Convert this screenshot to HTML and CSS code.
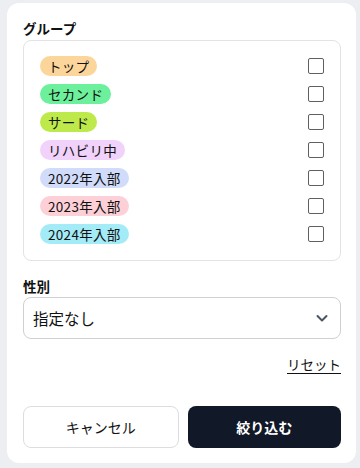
FILE: index.html
```html
<!DOCTYPE html>
<html lang="ja">
<head>
<meta charset="utf-8">
<link rel="stylesheet" href="styles.css">
</head>
<body>
<div class="modal">
  <div class="label">グループ</div>
  <div class="group-box">
    <div class="row"><span class="badge b-top">トップ</span><span class="check"></span></div>
    <div class="row"><span class="badge b-second">セカンド</span><span class="check"></span></div>
    <div class="row"><span class="badge b-third">サード</span><span class="check"></span></div>
    <div class="row"><span class="badge b-rehab">リハビリ中</span><span class="check"></span></div>
    <div class="row"><span class="badge b-2022">2022年入部</span><span class="check"></span></div>
    <div class="row"><span class="badge b-2023">2023年入部</span><span class="check"></span></div>
    <div class="row"><span class="badge b-2024">2024年入部</span><span class="check"></span></div>
  </div>
  <div class="label label-gender">性別</div>
  <div class="select">
    <span>指定なし</span>
    <svg class="chev" width="14" height="14" viewBox="0 0 14 14"><path d="M2.5 5 L7 9.5 L11.5 5" fill="none" stroke="#4b5563" stroke-width="2" stroke-linecap="round" stroke-linejoin="round"/></svg>
  </div>
  <div class="reset-row"><span class="reset">リセット</span></div>
  <div class="actions">
    <button class="btn btn-cancel">キャンセル</button>
    <button class="btn btn-apply">絞り込む</button>
  </div>
</div>
</body>
</html>
```
FILE: styles.css
```css
html, body {
  margin: 0;
  padding: 0;
}
body {
  width: 360px;
  height: 468px;
  background: #eceef1;
  font-family: "Noto Sans CJK JP", "Noto Sans", sans-serif;
  color: #111;
  overflow: hidden;
  padding-top: 3px;
  box-sizing: border-box;
}
.modal {
  margin-left: 7px;
  width: 349px;
  height: 460px;
  box-sizing: border-box;
  background: #fff;
  border-radius: 12px;
  padding: 16px 15px 15px 16px;
  display: flex;
  flex-direction: column;
}
.label {
  font-size: 13.5px;
  font-weight: 700;
  line-height: 18px;
  margin-bottom: 3px;
}
.label-gender {
  margin-top: 16px;
  margin-bottom: 2px;
}
.group-box {
  border: 1px solid #e2e3e5;
  border-radius: 8px;
  padding: 15px 16px 16px 16px;
  display: flex;
  flex-direction: column;
  gap: 8px;
}
.row {
  display: flex;
  align-items: center;
  justify-content: space-between;
  height: 20px;
}
.badge {
  font-size: 13.5px;
  letter-spacing: 0.3px;
  line-height: 20px;
  height: 20px;
  padding: 0 8px;
  border-radius: 10px;
  color: #111;
}
.b-top { background: #fcd59b; }
.b-second { background: #6cf09b; }
.b-third { background: #bdea4a; }
.b-rehab { background: #f1d2fb; }
.b-2022 { background: #d0dcfa; }
.b-2023 { background: #fdd0d8; }
.b-2024 { background: #a4ebf8; }
.check {
  width: 16px;
  height: 16px;
  box-sizing: border-box;
  border: 1px solid #5f5f5f;
  border-radius: 2px;
}
.select {
  height: 42px;
  box-sizing: border-box;
  border: 1px solid #cfd0d3;
  border-radius: 8px;
  display: flex;
  align-items: center;
  justify-content: space-between;
  padding: 0 11px 0 9px;
  font-size: 15.5px;
}
.chev { display: block; }
.reset-row {
  display: flex;
  justify-content: flex-end;
  margin-top: 16px;
}
.reset {
  font-size: 13.5px;
  line-height: 18px;
  text-decoration: underline;
  text-underline-offset: 3px;
}
.actions {
  margin-top: auto;
  display: flex;
  gap: 9px;
}
.btn {
  flex: 1;
  height: 42px;
  border-radius: 8px;
  font-family: "Noto Sans CJK JP", "Noto Sans", sans-serif;
  font-size: 14px;
  cursor: pointer;
}
.btn-cancel {
  background: #fff;
  border: 1px solid #dcdde0;
  color: #111;
}
.btn-apply {
  background: #111827;
  border: none;
  color: #fff;
  font-weight: 700;
}
```
